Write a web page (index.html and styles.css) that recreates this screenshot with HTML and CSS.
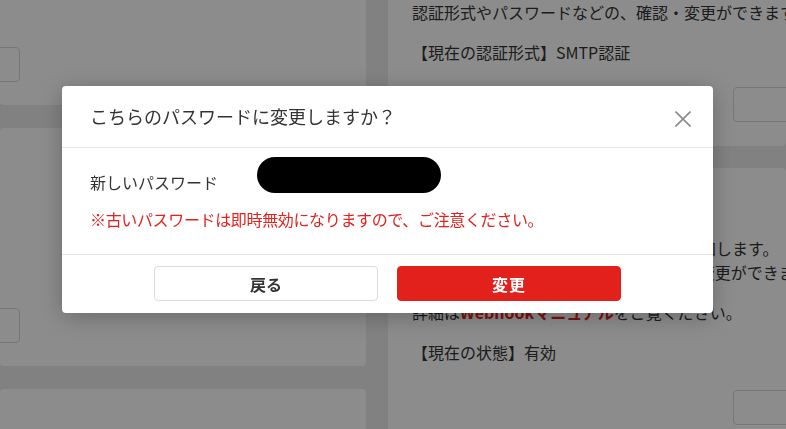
FILE: index.html
```html
<!DOCTYPE html>
<html lang="ja">
<head>
<meta charset="utf-8">
<title>パスワード変更</title>
<link rel="stylesheet" href="styles.css">
</head>
<body>
<div class="page">
  <div class="col col-left">
    <section class="card card-l1">
      <div class="field field-left"></div>
    </section>
    <section class="card card-l2">
      <div class="field field-left"></div>
    </section>
    <section class="card card-l3"></section>
  </div>
  <div class="col col-right">
    <section class="card card-r1">
      <p class="txt">認証形式やパスワードなどの、確認・変更ができます。</p>
      <p class="txt">【現在の認証形式】SMTP認証</p>
      <div class="field field-right"></div>
    </section>
    <section class="card card-r2">
      <h2 class="card-title">Webhook設定</h2>
      <p class="txt">受信メールの内容を、外部サービスへ通知します。<br>送信先や通知する内容について、設定の変更ができます。</p>
      <p class="txt">詳細は<a class="link">Webhookマニュアル</a>をご覧ください。</p>
      <p class="txt">【現在の状態】有効</p>
      <div class="field field-right"></div>
    </section>
  </div>
</div>

<div class="overlay"></div>

<div class="modal">
  <div class="modal-header">
    <h1 class="modal-title">こちらのパスワードに変更しますか？</h1>
    <button class="close" aria-label="閉じる">
      <svg width="16" height="16" viewBox="0 0 16 16"><path d="M0.5 0.5 L15.5 15.5 M15.5 0.5 L0.5 15.5" stroke="#8a8a8a" stroke-width="1.6" fill="none"/></svg>
    </button>
  </div>
  <div class="modal-body">
    <div class="pw-row">
      <span class="pw-label">新しいパスワード</span>
      <span class="pw-mask"></span>
    </div>
    <p class="notice">※古いパスワードは即時無効になりますので、ご注意ください。</p>
  </div>
  <div class="modal-footer">
    <button class="btn btn-back">戻る</button>
    <button class="btn btn-change">変更</button>
  </div>
</div>
</body>
</html>
```

FILE: styles.css
```css
* { box-sizing: border-box; }
html, body { margin: 0; padding: 0; }
html { overflow: hidden; }
body {
  width: 786px;
  height: 429px;
  overflow: hidden;
  background: #ececec;
  font-family: "Noto Sans CJK JP", "Noto Sans", sans-serif;
  color: #333;
}
.page {
  display: grid;
  grid-template-columns: 366px 398px;
  column-gap: 22px;
  height: 429px;
  overflow: hidden;
}
.col { display: flex; flex-direction: column; overflow: hidden; }
.col-left { gap: 23px; }
.col-right { gap: 22px; }
.card {
  background: #fff;
  border-radius: 0 0 4px 4px;
  overflow: hidden;
  flex-shrink: 0;
}
.card-l2, .card-l3, .card-r2 { border-radius: 4px; }
.card-l1 { height: 105px; padding-top: 47px; }
.card-l2 { height: 238px; padding-top: 180px; }
.card-l3 { height: 60px; border-radius: 4px 4px 0 0; }
.field {
  height: 35px;
  border: 1px solid #d8d8d8;
  border-radius: 4px;
  background: #fff;
}
.field-left { width: 40px; margin-left: -20px; }
.field-right { width: 100px; margin-left: 321px; }
.card-r1 { height: 146px; padding: 0 0 0 24px; }
.card-r2 { height: 261px; padding: 24px 0 0 24px; border-radius: 4px 4px 0 0; }
.txt {
  margin: 0 0 16px;
  font-size: 16px;
  line-height: 24px;
  white-space: nowrap;
}
.card-r1 .txt:nth-of-type(2) { margin-bottom: 23px; }
.card-r2 .txt:last-of-type { margin-bottom: 26px; }
.card-title {
  margin: 0 0 20px;
  font-size: 18px;
  line-height: 24px;
  font-weight: 700;
}
.link { color: #e0201c; font-weight: 700; }

.overlay {
  position: fixed;
  inset: 0;
  background: rgba(0, 0, 0, 0.45);
}

.modal {
  position: fixed;
  left: 62px;
  top: 86px;
  width: 651px;
  background: #fff;
  border-radius: 4px;
  box-shadow: 0 4px 24px rgba(0, 0, 0, 0.25);
}
.modal-header {
  display: flex;
  align-items: center;
  justify-content: space-between;
  padding: 17px 22px 17px 28px;
  border-bottom: 1px solid #e4e4e4;
}
.modal-title {
  margin: 0;
  font-size: 18px;
  line-height: 27px;
  font-weight: 400;
  color: #333;
}
.close {
  display: flex;
  padding: 0;
  margin-top: 4px;
  border: 0;
  background: none;
  width: 16px;
  height: 16px;
}
.modal-body {
  padding: 9px 28px 23px;
  border-bottom: 1px solid #e4e4e4;
}
.pw-row { display: flex; align-items: flex-start; }
.pw-label {
  width: 167px;
  flex-shrink: 0;
  padding-top: 14px;
  font-size: 16px;
  line-height: 22px;
  color: #333;
}
.pw-mask {
  width: 184px;
  height: 36px;
  border-radius: 18px;
  background: #000;
}
.notice {
  margin: 14px 0 0;
  font-size: 16px;
  line-height: 24px;
  letter-spacing: -0.35px;
  color: #e3221d;
  white-space: nowrap;
}
.modal-footer {
  display: flex;
  justify-content: center;
  gap: 19px;
  padding: 11px 0 12px;
}
.btn {
  width: 224px;
  height: 35px;
  border-radius: 4px;
  font-family: "Noto Sans CJK JP", "Noto Sans", sans-serif;
  font-size: 16px;
  font-weight: 700;
  line-height: 1;
  cursor: pointer;
}
.btn-back {
  background: #fff;
  border: 1px solid #dcdcdc;
  color: #333;
}
.btn-change {
  background: #e2211c;
  border: 1px solid #e2211c;
  color: #fff;
  letter-spacing: 1px;
}
```
